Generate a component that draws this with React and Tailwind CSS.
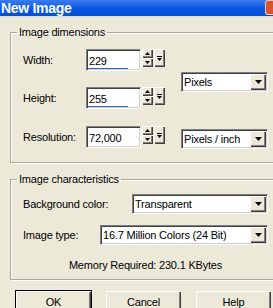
import React from 'react';

const raised = 'bg-[#ece9d8] shadow-[inset_1px_1px_0_#fff,inset_-1px_-1px_0_#404040,inset_-2px_-2px_0_#808080]';
const sunken = 'bg-white border border-t-[#808080] border-l-[#808080] border-b-white border-r-white shadow-[inset_1px_1px_0_#404040,inset_-1px_-1px_0_#d4d0c8]';
const etched = 'border border-[#aca899] shadow-[1px_1px_0_#fff,inset_1px_1px_0_#fff]';

const Tri = ({ w = 7, h = 4, up = false }) => (
  <svg width={w} height={h} viewBox={`0 0 ${w} ${h}`} className="block">
    <polygon points={up ? `${w / 2},0 ${w},${h} 0,${h}` : `0,0 ${w},0 ${w / 2},${h}`} fill="#000" />
  </svg>
);

const Combo = ({ value, width }) => (
  <div className={`flex h-[20px] items-center ${sunken}`} style={{ width }}>
    <span className="flex-1 pl-[2px] leading-[13px]">{value}</span>
    <div className={`flex h-[16px] w-[16px] items-center justify-center mr-[1px] ${raised}`}>
      <Tri />
    </div>
  </div>
);

const SpinField = ({ value, bar }) => (
  <div className="flex items-start">
    <div className={`flex h-[22px] w-[55px] flex-col ${sunken}`}>
      <span className="flex-1 pl-[2px] pt-[5px] leading-[13px]">{value}</span>
      {bar ? <div className="mb-[1px] ml-[1px] h-[2px] w-[40px] bg-[#2f62d0]" /> : null}
    </div>
    <div className="ml-[1px] flex flex-col">
      <div className={`flex h-[9px] w-[11px] items-center justify-center ${raised}`}>
        <Tri w={5} h={3} up />
      </div>
      <div className={`flex h-[9px] w-[11px] items-center justify-center ${raised}`}>
        <Tri w={5} h={3} />
      </div>
    </div>
    <div className={`ml-[1px] flex h-[18px] w-[11px] flex-col items-center justify-center gap-[1px] ${raised}`}>
      <div className="h-[1px] w-[5px] bg-black" />
      <Tri w={5} h={3} />
    </div>
  </div>
);

const Row = ({ label, children, labelW }) => (
  <div className="flex items-center">
    <span className="shrink-0" style={{ width: labelW }}>{label}</span>
    {children}
  </div>
);

const Button = ({ label, isDefault }) => (
  <div
    className={`flex h-[23px] w-[75px] shrink-0 items-center justify-center ${raised} ${
      isDefault ? 'outline outline-1 outline-black' : ''
    }`}
  >
    {label}
  </div>
);

export default function App() {
  return (
    <div className="h-[308px] w-[273px] overflow-hidden bg-[#ece9d8] font-['Liberation_Sans',Arial,sans-serif] text-[11px] tracking-[-0.2px] text-black">
      {/* title bar */}
      <div className="flex h-[16px] items-center bg-gradient-to-b from-[#3b7ef0] via-[#0a58e4] to-[#0650d8]">
        <span className="pl-[1px] text-[14px] font-bold tracking-[-0.3px] text-white">New Image</span>
        <div className="ml-auto mr-[-13px] h-[15px] w-[21px] self-start rounded-[3px] border border-white/70 bg-[#d9532c]" />
      </div>
      <div className="h-[1px] bg-[#d8e0f4]" />

      <div className="pl-[10px]">
        <fieldset className={`mt-[9px] w-[280px] pl-[12px] pr-[21px] pt-[10px] pb-[13px] ${etched}`}>
          <legend className="ml-[-6px] px-[2px] leading-[13px]">Image dimensions</legend>
          <div className="flex items-start">
            <div className="flex flex-col gap-[16px]">
              <Row label="Width:" labelW={63}>
                <SpinField value="229" bar />
              </Row>
              <Row label="Height:" labelW={63}>
                <SpinField value="255" bar />
              </Row>
              <div className="mt-[1px]">
                <Row label="Resolution:" labelW={63}>
                  <SpinField value="72,000" />
                </Row>
              </div>
            </div>
            <div className="ml-auto flex flex-col">
              <div className="mt-[23px]">
                <Combo value="Pixels" width={87} />
              </div>
              <div className="mt-[37px]">
                <Combo value="Pixels / inch" width={87} />
              </div>
            </div>
          </div>
        </fieldset>

        <fieldset className={`mt-[10px] w-[280px] pl-[12px] pr-[21px] pt-[8px] pb-[7px] ${etched}`}>
          <legend className="ml-[-6px] px-[2px] leading-[13px]">Image characteristics</legend>
          <div className="flex items-center justify-between">
            <span>Background color:</span>
            <Combo value="Transparent" width={136} />
          </div>
          <div className="mt-[11px] flex items-center justify-between">
            <span>Image type:</span>
            <Combo value="16.7 Million Colors (24 Bit)" width={168} />
          </div>
          <div className="mt-[14px] text-center leading-[13px]">Memory Required: 230.1 KBytes</div>
        </fieldset>
      </div>

      <div className="mt-[11px] flex gap-[15px] pl-[16px]">
        <Button label="OK" isDefault />
        <Button label="Cancel" />
        <Button label="Help" />
      </div>
    </div>
  );
}
